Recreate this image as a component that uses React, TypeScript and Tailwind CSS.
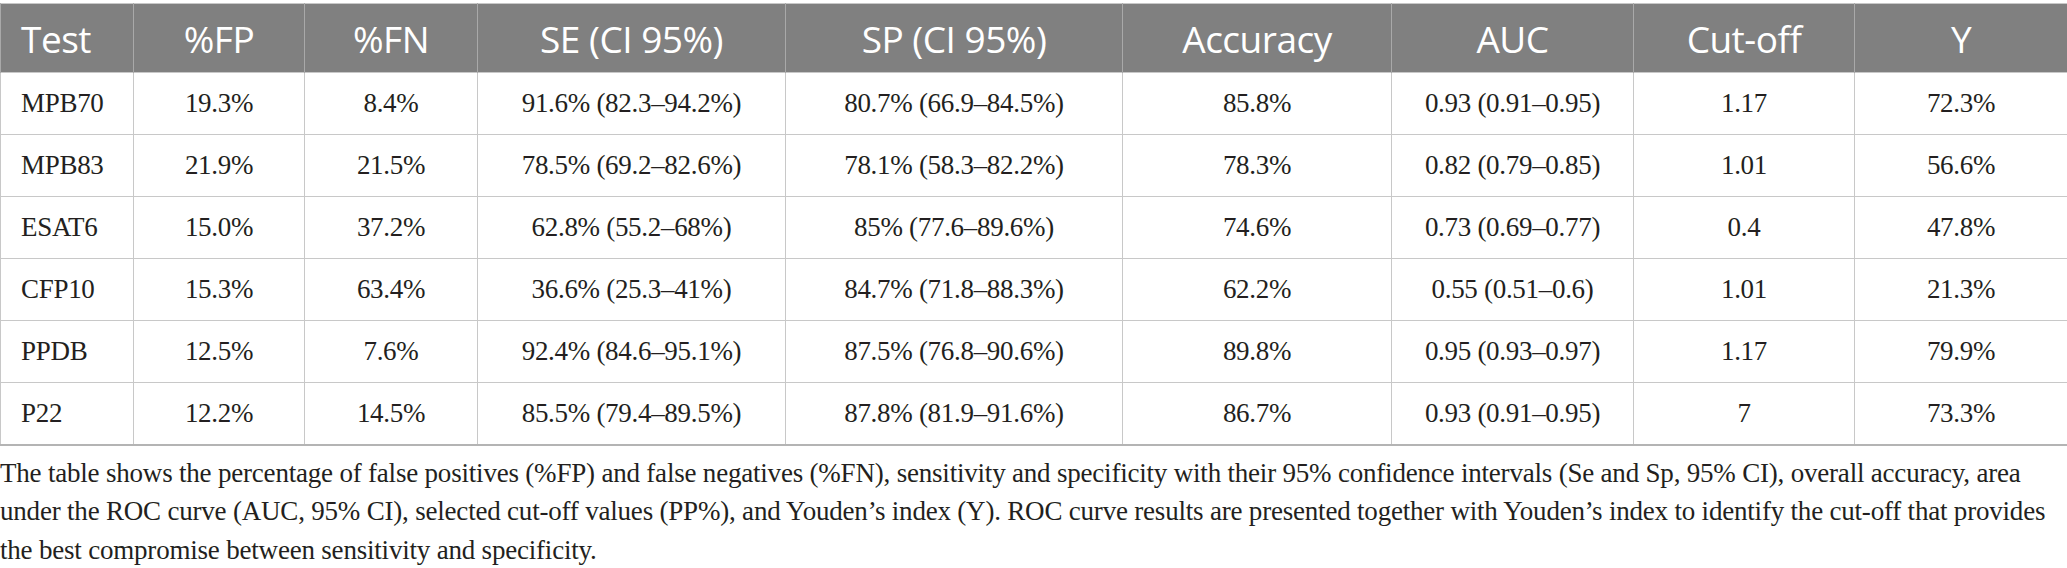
const columns = [
  { label: "Test", width: "w-[133px]" },
  { label: "%FP", width: "w-[171px]" },
  { label: "%FN", width: "w-[173px]" },
  { label: "SE (CI 95%)", width: "w-[308px]" },
  { label: "SP (CI 95%)", width: "w-[337px]" },
  { label: "Accuracy", width: "w-[269px]" },
  { label: "AUC", width: "w-[242px]" },
  { label: "Cut-off", width: "w-[221px]" },
  { label: "Y", width: "w-[213px]" },
];

const rows = [
  ["MPB70", "19.3%", "8.4%", "91.6% (82.3–94.2%)", "80.7% (66.9–84.5%)", "85.8%", "0.93 (0.91–0.95)", "1.17", "72.3%"],
  ["MPB83", "21.9%", "21.5%", "78.5% (69.2–82.6%)", "78.1% (58.3–82.2%)", "78.3%", "0.82 (0.79–0.85)", "1.01", "56.6%"],
  ["ESAT6", "15.0%", "37.2%", "62.8% (55.2–68%)", "85% (77.6–89.6%)", "74.6%", "0.73 (0.69–0.77)", "0.4", "47.8%"],
  ["CFP10", "15.3%", "63.4%", "36.6% (25.3–41%)", "84.7% (71.8–88.3%)", "62.2%", "0.55 (0.51–0.6)", "1.01", "21.3%"],
  ["PPDB", "12.5%", "7.6%", "92.4% (84.6–95.1%)", "87.5% (76.8–90.6%)", "89.8%", "0.95 (0.93–0.97)", "1.17", "79.9%"],
  ["P22", "12.2%", "14.5%", "85.5% (79.4–89.5%)", "87.8% (81.9–91.6%)", "86.7%", "0.93 (0.91–0.95)", "7", "73.3%"],
];

const caption = [
  "The table shows the percentage of false positives (%FP) and false negatives (%FN), sensitivity and specificity with their 95% confidence intervals (Se and Sp, 95% CI), overall accuracy, area",
  "under the ROC curve (AUC, 95% CI), selected cut-off values (PP%), and Youden’s index (Y). ROC curve results are presented together with Youden’s index to identify the cut-off that provides",
  "the best compromise between sensitivity and specificity.",
];

export default function App() {
  return (
    <div className="w-[2067px] bg-white pt-[3px] text-[#231f20]">
      <table className="w-[2067px] table-fixed border-collapse">
        <colgroup>
          {columns.map((c) => (
            <col key={c.label} className={c.width} />
          ))}
        </colgroup>
        <thead>
          <tr className="h-[69px] border-t border-[#c8c8c8] bg-[#808080]">
            {columns.map((c, i) => (
              <th
                key={c.label}
                className={`border-x border-[#a9a9a9] font-['Open_Sans',sans-serif] text-[37px] font-normal leading-none tracking-[-0.5px] text-white ${
                  i === 0 ? "pl-[20px] text-left" : "text-center"
                }`}
              >
                {c.label}
              </th>
            ))}
          </tr>
        </thead>
        <tbody className="font-['Liberation_Serif',serif] text-[27px] tracking-[-0.3px]">
          {rows.map((r, ri) => (
            <tr
              key={r[0]}
              className={`h-[62px] ${ri === rows.length - 1 ? "border-b-2 border-b-[#b4b4b4]" : ""}`}
            >
              {r.map((cell, ci) => (
                <td
                  key={ci}
                  className={`border border-[#c8c8c8] leading-none ${
                    ci === 0 ? "pl-[20px] text-left" : "text-center"
                  }`}
                >
                  {cell}
                </td>
              ))}
            </tr>
          ))}
        </tbody>
      </table>
      <p className="mt-[8px] font-['Liberation_Serif',serif] text-[27px] leading-[38.5px] tracking-[-0.2px]">
        {caption.map((line) => (
          <span key={line} className="block whitespace-nowrap">
            {line}
          </span>
        ))}
      </p>
    </div>
  );
}
